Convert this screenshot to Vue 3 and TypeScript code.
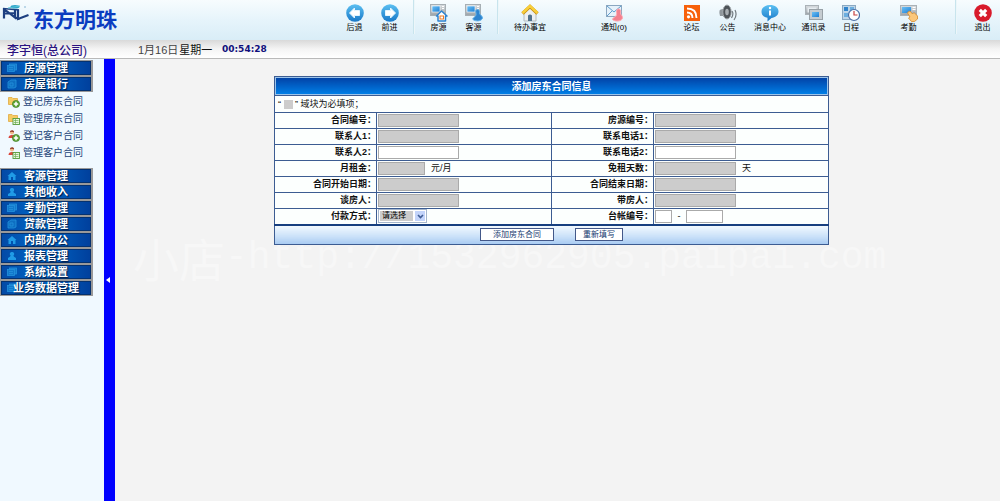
<script setup lang="ts">
import { ref } from 'vue'

interface Tool {
  label: string
  icon: string
  size: string
  divider?: 'narrow' | 'wide'
}

interface Field {
  id: string
  label: string
  kind: 'text' | 'short' | 'select' | 'pair'
  required?: boolean
  unit?: string
}

const tools: Tool[] = [
  { label: '后退', icon: 'back', size: 'w35' },
  { label: '前进', icon: 'forward', size: 'w35', divider: 'narrow' },
  { label: '房源', icon: 'house', size: 'w35' },
  { label: '客源', icon: 'client', size: 'w35', divider: 'narrow' },
  { label: '待办事宜', icon: 'home', size: 'w50' },
  { label: '通知(0)', icon: 'mail', size: 'w118' },
  { label: '论坛', icon: 'rss', size: 'w37' },
  { label: '公告', icon: 'speaker', size: 'w35' },
  { label: '消息中心', icon: 'info', size: 'w50' },
  { label: '通讯录', icon: 'contacts', size: 'w37' },
  { label: '日程', icon: 'schedule', size: 'w38' },
  { label: '考勤', icon: 'attendance', size: 'w77', divider: 'wide' },
  { label: '退出', icon: 'exit', size: 'w35' },
]

const topMenus = [
  { label: '房源管理', icon: 'cards' },
  { label: '房屋银行', icon: 'book' },
]
const subMenus = [
  { label: '登记房东合同', person: false, add: true },
  { label: '管理房东合同', person: false, add: false },
  { label: '登记客户合同', person: true, add: true },
  { label: '管理客户合同', person: true, add: false },
]
const bottomMenus = [
  { label: '客源管理', icon: 'hut' },
  { label: '其他收入', icon: 'user' },
  { label: '考勤管理', icon: 'cards' },
  { label: '贷款管理', icon: 'book' },
  { label: '内部办公', icon: 'hut' },
  { label: '报表管理', icon: 'user' },
  { label: '系统设置', icon: 'cards' },
  { label: '业务数据管理', icon: 'cards' },
]

const rows: [Field, Field][] = [
  [
    { id: 'contract', label: '合同编号', kind: 'text', required: true },
    { id: 'house', label: '房源编号', kind: 'text', required: true },
  ],
  [
    { id: 'contact1', label: '联系人1', kind: 'text', required: true },
    { id: 'phone1', label: '联系电话1', kind: 'text', required: true },
  ],
  [
    { id: 'contact2', label: '联系人2', kind: 'text' },
    { id: 'phone2', label: '联系电话2', kind: 'text' },
  ],
  [
    { id: 'rent', label: '月租金', kind: 'short', required: true, unit: '元/月' },
    { id: 'free', label: '免租天数', kind: 'text', required: true, unit: '天' },
  ],
  [
    { id: 'start', label: '合同开始日期', kind: 'text', required: true },
    { id: 'end', label: '合同结束日期', kind: 'text', required: true },
  ],
  [
    { id: 'agent', label: '谈房人', kind: 'text', required: true },
    { id: 'guide', label: '带房人', kind: 'text', required: true },
  ],
  [
    { id: 'payment', label: '付款方式', kind: 'select' },
    { id: 'ledger', label: '台帐编号', kind: 'pair' },
  ],
]

const collapsed = ref(false)
</script>

<template>
  <div class="page">
    <svg class="defs" width="0" height="0" aria-hidden="true">
      <defs>
        <linearGradient id="gBlue" x1="0" y1="0" x2="0" y2="1">
          <stop offset="0" stop-color="#5cc0f2" />
          <stop offset="1" stop-color="#1878c8" />
        </linearGradient>
        <linearGradient id="gGrey" x1="0" y1="0" x2="0" y2="1">
          <stop offset="0" stop-color="#d9dde0" />
          <stop offset="1" stop-color="#9ba3a9" />
        </linearGradient>
        <linearGradient id="gScreen" x1="0" y1="0" x2="1" y2="1">
          <stop offset="0" stop-color="#6cc0f5" />
          <stop offset="1" stop-color="#1f80d4" />
        </linearGradient>
      </defs>
    </svg>

    <header class="header">
      <div class="brand">
        <svg class="logo" width="30" height="20" viewBox="0 0 30 20" aria-hidden="true">
          <path d="M3 4V14.500M3 5L14 13.500V5.500M3 9.500L14 9M17 5.500V15L27.500 11M14 13.500L19 15" fill="none" stroke="#1c3f80" stroke-width="2.200" />
          <path d="M2 4.500L18 6" stroke="#1c3f80" stroke-width="1.500" />
          <ellipse cx="14" cy="2.800" rx="4.500" ry="1.800" fill="#2aa3c9" />
          <path d="M7 4L19 2" stroke="#57c5d8" stroke-width="1" />
          <circle cx="24" cy="3" r="1" fill="#aacbe0" />
        </svg>
        <span class="brand-name">东方明珠</span>
      </div>
      <nav class="tools">
        <template v-for="t in tools" :key="t.label">
          <button type="button" class="tool" :class="t.size">
            <svg width="18" height="18" viewBox="0 0 18 18" aria-hidden="true">
              <g v-if="t.icon === 'back' || t.icon === 'forward'">
                <circle cx="9" cy="9" r="8.800" fill="url(#gBlue)" />
                <path v-if="t.icon === 'back'" d="M3.500 9L8.500 4V6.500H13.500V11.500H8.500V14Z" fill="#fff" stroke="#e4f5ff" stroke-linejoin="round" />
                <path v-else d="M14.500 9L9.500 4V6.500H4.500V11.500H9.500V14Z" fill="#fff" stroke="#e4f5ff" stroke-linejoin="round" />
              </g>
              <g v-else-if="t.icon === 'house' || t.icon === 'client'">
                <rect x="0.500" y="0.500" width="15" height="11" fill="url(#gGrey)" stroke="#a7afb4" />
                <rect x="2" y="2" width="8" height="6" fill="url(#gScreen)" stroke="#fff" stroke-width="0.600" />
                <path d="M12 2.500H14M12 4.500H14" stroke="#fff" />
                <g v-if="t.icon === 'house'">
                  <path d="M6.500 12L11.500 7L17 12H15.500V17H8V12Z" fill="#fff" stroke="#2e83cf" stroke-width="1.500" stroke-linejoin="round" />
                  <rect x="10" y="12" width="3.500" height="3" fill="#fff" stroke="#ef7a22" />
                </g>
                <path v-else d="M11 6C13 4.500 15 6 14.500 9C14 11 17.500 11 17.500 14C17 17 11 18 8 15.500C7 14 10.500 13 11 11C11.500 9 10 7.500 11 6Z" fill="#2e84cf" stroke="#64b3e9" />
              </g>
              <g v-else-if="t.icon === 'home'">
                <path d="M3 8L9 3L15 8V17H3Z" fill="#eceff1" stroke="#b3babf" />
                <path d="M1.500 9.500L9 2.500L16.500 9.500" fill="none" stroke="#c68e0e" stroke-width="3.400" />
                <path d="M1.500 9L9 2L16.500 9" fill="none" stroke="#f8ce3a" stroke-width="2.400" />
                <path d="M7 17V11.500Q9 9.500 11 11.500V17Z" fill="#51718b" />
              </g>
              <g v-else-if="t.icon === 'mail'">
                <rect x="1.500" y="1.500" width="15" height="11" fill="#e6f2fb" stroke="#8ba7c0" />
                <path d="M2 2L9 8L16 2M2 12L7 7M16 12L11 7" fill="none" stroke="#5e9dcd" />
                <path d="M12 5.500C14.500 4 16.500 6 15.500 9C15.500 11 17.500 11 17.500 14C17 17.500 10 18 7.500 15.500C7.500 13.500 11 13 11.500 11C12 9 11 7.500 12 5.500Z" fill="#f3808f" stroke="#ffaab2" />
              </g>
              <g v-else-if="t.icon === 'rss'">
                <rect x="1" y="1" width="16" height="16" fill="#f7600a" />
                <circle cx="5.500" cy="12.800" r="1.600" fill="#fff" />
                <path d="M4 8.500Q9.500 8.500 9.500 14M4 4.500Q13.500 4.500 13.500 14" fill="none" stroke="#fff" stroke-width="1.900" />
              </g>
              <g v-else-if="t.icon === 'speaker'">
                <path d="M0.500 6.500Q1 5 4 5L8 1V15L4 12H1Q0 9 0.500 6.500Z" fill="#8f979c" />
                <ellipse cx="8" cy="8" rx="4.200" ry="7" fill="#4d5358" stroke="#a5abaf" />
                <ellipse cx="8" cy="8" rx="1.800" ry="3.200" fill="#a7adb1" />
                <path d="M13 7Q15 10 12.500 14M16 6Q18.500 11 15 16" fill="none" stroke="#737b80" stroke-width="1.200" />
              </g>
              <g v-else-if="t.icon === 'info'">
                <path d="M9 1C14 1 17.500 3.500 17.500 7.500S14 13.500 10.500 14L6.500 17.500V13.700C2.500 13 0.500 11 0.500 7.500S4 1 9 1Z" fill="url(#gBlue)" />
                <path d="M9 6.500V11.500" stroke="#fff" stroke-width="2" />
                <circle cx="9" cy="4" r="1.200" fill="#fff" />
              </g>
              <g v-else-if="t.icon === 'contacts'">
                <rect x="0.500" y="1.500" width="13" height="9" fill="url(#gGrey)" stroke="#aab2b7" />
                <rect x="2.500" y="3.500" width="9" height="5" fill="#e7edf1" />
                <rect x="4.500" y="5.500" width="13" height="10" fill="#c5ccd1" stroke="#98a1a7" />
                <rect x="7" y="8" width="7" height="5" fill="url(#gScreen)" />
              </g>
              <g v-else-if="t.icon === 'schedule'">
                <rect x="0.500" y="1.500" width="13" height="14" fill="#bdd5e8" stroke="#8aa9c2" />
                <rect x="2" y="3" width="4" height="4" fill="#2f83cb" />
                <rect x="8" y="3" width="4" height="4" fill="#6caedf" />
                <rect x="2" y="9" width="4" height="4" fill="#6caedf" />
                <circle cx="12" cy="11" r="5.500" fill="#fff" stroke="#4a6fa6" stroke-width="1.200" />
                <path d="M12 7V11H15.500" fill="none" stroke="#c64141" stroke-width="1.200" />
              </g>
              <g v-else-if="t.icon === 'attendance'">
                <rect x="0.500" y="1.500" width="16" height="10" fill="url(#gGrey)" stroke="#aab2b7" />
                <rect x="2" y="3" width="9" height="6" fill="url(#gScreen)" />
                <path d="M12.500 3.500H15.500M12.500 5.500H15.500" stroke="#fff" />
                <path d="M8 8L10 7L12.500 10L14 8.500L17.500 12V15L14.500 17.500H11.500L8.500 14L10 13L7.500 9Z" fill="#fbc77a" stroke="#d58a2c" stroke-width="0.800" />
              </g>
              <g v-else>
                <circle cx="9" cy="9" r="8.800" fill="#d81a2b" />
                <path d="M5.800 5.800L12.200 12.200M12.200 5.800L5.800 12.200" stroke="#fff" stroke-width="3.200" />
              </g>
            </svg>
            <span>{{ t.label }}</span>
          </button>
          <i v-if="t.divider" class="divider" :class="t.divider"></i>
        </template>
      </nav>
    </header>

    <div class="status">
      <span class="user">李宇恒(总公司)</span>
      <span class="date">1月16日<span class="weekday">星期一</span></span>
      <time class="clock">00:54:28</time>
    </div>

    <div class="body">
      <aside v-show="!collapsed" class="sidebar">
        <template v-for="(group, g) in [topMenus, bottomMenus]" :key="g">
          <button v-for="m in group" :key="m.label" type="button" class="menu">
            <svg class="menu-icon" width="10" height="10" viewBox="0 0 10 10" aria-hidden="true">
              <g v-if="m.icon === 'cards'" fill="#1279cc" stroke="#2492dc" stroke-width="0.800">
                <rect x="2.500" y="1" width="7" height="6" />
                <rect x="0.500" y="2.500" width="7" height="6" />
                <path d="M2 4.500H6M2 6.500H6" />
              </g>
              <g v-else-if="m.icon === 'book'" fill="#0e6fc2" stroke="#2492dc" stroke-width="0.800">
                <path d="M1 3L4 1H9V8L7 9H1Z" />
                <path d="M3 4H6V7H3Z" />
              </g>
              <path v-else-if="m.icon === 'hut'" d="M0.500 5L5 1L9.500 5H8.500V9H6V6H4V9H1.500V5Z" fill="#209be6" />
              <path v-else d="M5 1A2 2 0 0 1 6.500 4.500Q6 5.500 9 7V9H1V7Q4 5.500 3.500 4.500A2 2 0 0 1 5 1Z" fill="#209be6" />
            </svg>
            <span class="menu-label">{{ m.label }}</span>
          </button>
          <ul v-if="g === 0" class="submenu">
            <li v-for="s in subMenus" :key="s.label">
              <a href="#">
                <svg width="12" height="12" viewBox="0 0 12 12" aria-hidden="true">
                  <g v-if="s.person">
                    <circle cx="4" cy="2.500" r="2" fill="#f0bd8b" />
                    <path d="M1.800 2.500Q2 0 4.500 0.200Q6.500 0.500 6 2.500Q4 1 1.800 2.500Z" fill="#913a27" />
                    <path d="M0.500 8Q0.500 5 4 5T7.500 8Z" fill="#d9473c" />
                  </g>
                  <path v-else d="M0.500 1.500H4L5 2.500H9.500V8.500H0.500Z" fill="#f6cb62" stroke="#dfaa42" stroke-width="0.800" />
                  <g v-if="s.add">
                    <circle cx="8" cy="8" r="3.600" fill="#5da536" stroke="#39791e" stroke-width="0.600" />
                    <path d="M8 5.800V10.200M5.800 8H10.200" stroke="#fff" stroke-width="1.500" />
                  </g>
                  <g v-else>
                    <rect x="5" y="5.500" width="6.500" height="6" fill="#e9f7df" stroke="#549b3a" stroke-width="0.900" />
                    <path d="M6 7.500H10.500M6 9.500H10.500M7.500 6V11" stroke="#70ad59" stroke-width="0.700" />
                  </g>
                </svg>
                <span>{{ s.label }}</span>
              </a>
            </li>
          </ul>
        </template>
      </aside>
      <button type="button" class="splitter" aria-label="菜单" @click="collapsed = !collapsed">
        <svg width="4" height="6" viewBox="0 0 4 6" aria-hidden="true"><path d="M4 0V6L0 3Z" fill="#fff" /></svg>
      </button>

      <main class="content">
        <p class="watermark"><span class="watermark-cn">小店</span>-http://1532962905.paipai.com</p>
        <form class="form" @submit.prevent>
          <table>
            <colgroup>
              <col class="c-label" /><col /><col class="c-label" /><col />
            </colgroup>
            <thead>
              <tr><th colspan="4" class="title">添加房东合同信息</th></tr>
            </thead>
            <tbody>
              <tr>
                <td colspan="4" class="note">“ <i class="swatch"></i> ” 域块为必填项；</td>
              </tr>
              <tr v-for="(pair, r) in rows" :key="r">
                <template v-for="f in pair" :key="f.id">
                  <th scope="row"><label :for="f.id">{{ f.label }}：</label></th>
                  <td>
                    <div class="field">
                      <span v-if="f.kind === 'select'" class="select">
                        <select :id="f.id"><option>请选择</option></select>
                        <span class="arrow">
                          <svg width="7" height="5" viewBox="0 0 7 5" aria-hidden="true"><path d="M1 1L3.500 3.500L6 1" fill="none" stroke="#3f5c94" stroke-width="1.600" /></svg>
                        </span>
                      </span>
                      <template v-else-if="f.kind === 'pair'">
                        <input :id="f.id" class="tiny" type="text" />
                        <span class="dash">-</span>
                        <input class="mid" type="text" aria-label="台帐编号" />
                      </template>
                      <input v-else :id="f.id" type="text" :class="{ required: f.required, short: f.kind === 'short' }" />
                      <span v-if="f.unit" class="unit">{{ f.unit }}</span>
                    </div>
                  </td>
                </template>
              </tr>
            </tbody>
            <tfoot>
              <tr>
                <td colspan="4" class="actions">
                  <div class="buttons">
                    <button type="submit">添加房东合同</button>
                    <button type="reset">重新填写</button>
                  </div>
                </td>
              </tr>
            </tfoot>
          </table>
        </form>
      </main>
    </div>
  </div>
</template>

<style>
body {
  margin: 0;
  background: #f3f3f3;
}
</style>

<style scoped>
.page {
  min-height: 100vh;
  display: flex;
  flex-direction: column;
  font-family: "Liberation Sans", "Noto Sans CJK SC", sans-serif;
  font-size: 9px;
  color: #111;
}
.page *,
.page *::before {
  box-sizing: border-box;
}
.defs {
  position: absolute;
}
button,
input,
select {
  font: inherit;
  margin: 0;
  padding: 0;
}
button {
  cursor: pointer;
}

.header {
  display: flex;
  height: 40px;
  background: linear-gradient(#f7fcfe, #e6f4fb 50%, #d9edf7);
}
.brand {
  flex: 1;
  display: flex;
  align-items: flex-start;
  padding: 4px 0 0 1px;
}
.brand-name {
  margin: 4px 0 0 2px;
  font-size: 21px;
  line-height: 24px;
  font-weight: 700;
  color: #0a3cc0;
  white-space: nowrap;
}
.tools {
  display: flex;
}
.tool {
  display: flex;
  flex-direction: column;
  align-items: center;
  padding-top: 4px;
  border: 0;
  background: none;
  font-size: 8px;
  line-height: 11px;
  color: #000;
  white-space: nowrap;
}
.w35 { width: 35px; }
.w37 { width: 37px; }
.w38 { width: 38px; }
.w50 { width: 50px; }
.w77 { width: 77px; }
.w118 { width: 118px; }
.divider {
  width: 2px;
  height: 34px;
  background: linear-gradient(90deg, #b5dbe7, #fff);
}
.divider.narrow {
  margin: 0 6px;
}
.divider.wide {
  margin: 0 8px;
}

.status {
  display: flex;
  align-items: center;
  height: 19px;
  padding-left: 7px;
  background: linear-gradient(#d9d9d9, #f4f4f4 50%, #fff);
  border-bottom: 1px solid #b9b9b9;
  white-space: nowrap;
}
.user {
  width: 131px;
  font-size: 12px;
  font-weight: 500;
  color: #2b1280;
}
.date {
  width: 84px;
  font-size: 11px;
  color: #444;
}
.weekday {
  margin-left: 1px;
  color: #111;
}
.clock {
  font-family: "DejaVu Sans", sans-serif;
  font-size: 9px;
  font-weight: 700;
  color: #10107c;
}

.body {
  flex: 1;
  display: flex;
}
.sidebar {
  width: 104px;
  padding-top: 1px;
  background: #f0f9ff;
}
.menu {
  display: flex;
  align-items: center;
  position: relative;
  width: 93px;
  height: 16px;
  border: 1px solid #999;
  border-right-width: 2px;
  background: linear-gradient(90deg, #0349a5, #0068c8 45%, #003f9c);
  box-shadow: inset 0 0 0 1px #05326f;
  color: #fff;
  font-size: 11px;
  line-height: 14px;
  font-weight: 700;
}
.menu-icon {
  position: absolute;
  left: 6px;
  top: 2px;
}
.menu-label {
  position: relative;
  flex: 1;
  text-align: center;
  text-shadow: 1px 1px 1px #001a44;
  white-space: nowrap;
}
.submenu {
  list-style: none;
  margin: 0;
  padding: 0 0 8px 8px;
}
.submenu a {
  display: flex;
  align-items: center;
  gap: 3px;
  height: 17px;
  font-size: 10px;
  color: #1c4477;
  text-decoration: none;
  white-space: nowrap;
}
.submenu svg {
  margin-top: 2px;
}
.splitter {
  display: flex;
  align-items: center;
  width: 11px;
  padding-left: 2px;
  border: 0;
  background: #00f;
}

.content {
  position: relative;
  flex: 1;
  min-width: 0;
  padding: 17px 12px 0 0;
  overflow: hidden;
}
.watermark {
  position: absolute;
  left: 18px;
  top: 168px;
  margin: 0;
  display: flex;
  align-items: center;
  height: 60px;
  font-family: "Liberation Mono", "Noto Sans CJK SC", monospace;
  font-size: 38px;
  color: #f7f7f7;
  white-space: nowrap;
}
.watermark-cn {
  font-size: 46px;
}
.form {
  position: relative;
  max-width: 555px;
  margin: 0 auto;
}
table {
  width: 100%;
  table-layout: fixed;
  border-collapse: collapse;
  background: #fcfffe;
}
.c-label {
  width: 102px;
}
th,
td {
  height: 16px;
  padding: 0 1px;
  border: 1px solid #3c5c92;
  line-height: 13px;
  text-align: left;
}
th[scope="row"] {
  padding-right: 0;
  text-align: right;
  font-weight: 700;
  white-space: nowrap;
}
th.title {
  height: 19px;
  text-align: center;
  font-size: 10px;
  color: #fff;
  background: linear-gradient(#0241a5, #0084ec);
  box-shadow: inset 0 0 0 1px #9cc4ea;
}
td.note {
  height: 17px;
  padding-left: 3px;
}
.swatch {
  display: inline-block;
  width: 9px;
  height: 9px;
  background: #ccc;
  vertical-align: middle;
}
.field {
  display: flex;
  align-items: center;
  height: 14px;
}
input {
  width: 81px;
  height: 13px;
  border: 1px solid #aaa;
  background: #fff;
}
input.required {
  background: #ccc;
}
input.short {
  width: 47px;
}
input.tiny {
  width: 17px;
}
input.mid {
  width: 37px;
}
.dash {
  width: 14px;
  text-align: center;
}
.unit {
  margin-left: 6px;
}
.select {
  display: flex;
  position: relative;
  width: 49px;
  height: 14px;
  padding: 1px;
  border: 1px solid #a5b6cc;
  background: #fff;
}
select {
  appearance: none;
  width: 33px;
  height: 10px;
  padding-left: 2px;
  border: 0;
  border-radius: 0;
  background: #ccc;
  font-size: 8px;
  line-height: 10px;
  color: #000;
}
.arrow {
  display: flex;
  align-items: center;
  justify-content: center;
  flex: 1;
  margin-left: 2px;
  background: #c3d4fa;
  pointer-events: none;
}
td.actions {
  height: 20px;
  border-top: 2px solid #173f7f;
  background: linear-gradient(#f2f9ff, #c9e0f8 60%, #a9cbf2);
}
.buttons {
  display: flex;
  justify-content: center;
  gap: 21px;
}
.buttons button {
  height: 13px;
  padding: 0 7px;
  border: 1px solid #435889;
  background: #fff;
  font-size: 8px;
  line-height: 11px;
  color: #12386e;
}
.buttons button[type="submit"] {
  padding: 0 12px;
}
</style>
